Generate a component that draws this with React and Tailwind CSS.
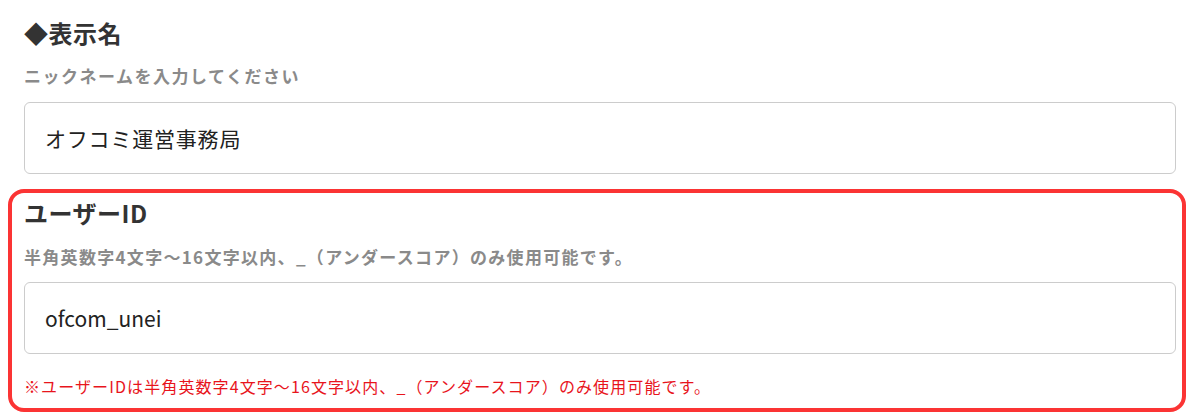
import React from 'react';

const font = { fontFamily: '"Noto Sans CJK JP", "Noto Sans", sans-serif' };

function Field({ value, tracking }) {
  return (
    <input
      type="text"
      defaultValue={value}
      readOnly
      className={`w-full h-[72px] rounded-md border border-[#cccccc] bg-white pl-5 text-[21px] text-[#222222] outline-none ${tracking}`}
    />
  );
}

export default function App() {
  return (
    <div className="w-[1200px] h-[416px] bg-white overflow-hidden" style={font}>
      <div className="px-6 pt-[15px]">
        <h2 className="text-[24px] leading-[36px] font-bold tracking-[0.5px] text-[#333333]">◆表示名</h2>
        <p className="mt-[13px] text-[17px] leading-[24px] font-semibold tracking-[1.5px] text-[#8a8a8a]">
          ニックネームを入力してください
        </p>
        <div className="mt-[14px]">
          <Field value="オフコミ運営事務局" tracking="tracking-[0.8px]" />
        </div>

        <div className="mt-[15px] ml-[-16px] mr-[-10px] rounded-2xl border-4 border-[#fb3434] pl-3 pr-[6px] pt-[2px] pb-[11px]">
          <h2 className="text-[24px] leading-[36px] font-bold tracking-[0.5px] text-[#333333]">ユーザーID</h2>
          <p className="mt-[14px] text-[17px] leading-[24px] font-semibold tracking-[1.3px] text-[#8a8a8a]">
            半角英数字4文字〜16文字以内、_（アンダースコア）のみ使用可能です。
          </p>
          <div className="mt-[13px]">
            <Field value="ofcom_unei" tracking="tracking-normal" />
          </div>
          <p className="mt-[21px] text-[16px] leading-[22px] tracking-[1.1px] text-[#e8141c]">
            ※ユーザーIDは半角英数字4文字〜16文字以内、_（アンダースコア）のみ使用可能です。
          </p>
        </div>
      </div>
    </div>
  );
}
